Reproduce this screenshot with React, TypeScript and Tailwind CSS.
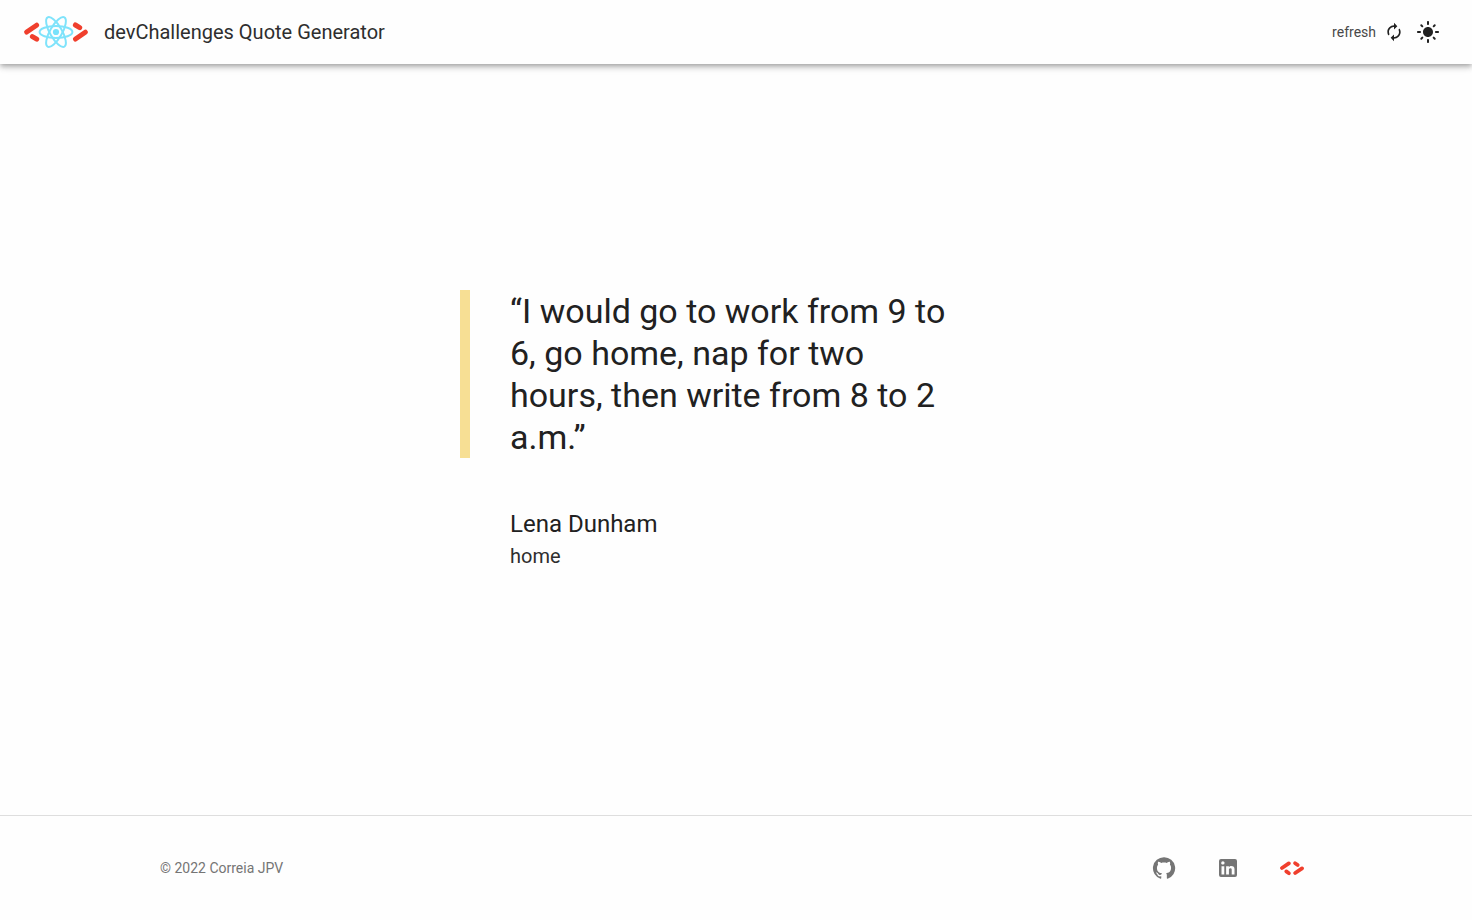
import { MdAutorenew, MdLightMode } from "react-icons/md";

function ReactLogo() {
  return (
    <svg viewBox="0 0 64 48" className="h-12 w-16" aria-hidden="true">
      <g stroke="#f03f2d" strokeWidth="5" strokeLinecap="round">
        <path d="M2.7 24 L12.6 17.2" />
        <path d="M8.4 28.6 L12.7 31.2" />
        <path d="M51.4 17 L55.7 19.6" />
        <path d="M51.5 31 L61.3 24.2" />
      </g>
      <g fill="none" stroke="#7fe3fb" strokeWidth="2">
        <ellipse cx="32" cy="24" rx="16.4" ry="6" />
        <ellipse cx="32" cy="24" rx="16.8" ry="6" transform="rotate(60 32 24)" />
        <ellipse cx="32" cy="24" rx="16.8" ry="6" transform="rotate(120 32 24)" />
      </g>
      <circle cx="32" cy="24" r="3.1" fill="#78e2fb" />
    </svg>
  );
}

function GitHubIcon() {
  return (
    <svg viewBox="0 0 24 24" className="size-6" fill="currentColor" aria-hidden="true">
      <path d="M12 1.27a11 11 0 00-3.48 21.46c.55.09.73-.28.73-.55v-1.84c-3.03.64-3.67-1.46-3.67-1.46-.55-1.29-1.28-1.65-1.28-1.65-.92-.65.1-.65.1-.65 1.1 0 1.73 1.1 1.73 1.1.92 1.65 2.57 1.2 3.21.92a2 2 0 01.64-1.47c-2.47-.27-5.04-1.19-5.04-5.5 0-1.1.46-2.1 1.2-2.84a3.76 3.76 0 010-2.93s.91-.28 3.11 1.1c1.8-.49 3.7-.49 5.5 0 2.1-1.38 3.02-1.1 3.02-1.1a3.76 3.76 0 01.1 2.93c.83.74 1.2 1.74 1.2 2.94 0 4.21-2.57 5.13-5.04 5.4.45.37.82.92.82 2.02v3.03c0 .27.1.64.73.55A11 11 0 0012 1.27" />
    </svg>
  );
}

function LinkedInIcon() {
  return (
    <svg viewBox="0 0 24 24" className="size-6" fill="currentColor" aria-hidden="true">
      <path d="M19 3a2 2 0 0 1 2 2v14a2 2 0 0 1-2 2H5a2 2 0 0 1-2-2V5a2 2 0 0 1 2-2h14m-.5 15.5v-5.3a3.26 3.26 0 0 0-3.26-3.26c-.85 0-1.84.52-2.32 1.3v-1.11h-2.79v8.37h2.79v-4.93c0-.77.62-1.4 1.39-1.4a1.4 1.4 0 0 1 1.4 1.4v4.93h2.79M6.88 8.56a1.68 1.68 0 0 0 1.68-1.68c0-.93-.75-1.69-1.68-1.69a1.69 1.69 0 0 0-1.69 1.69c0 .93.76 1.68 1.69 1.68m1.39 9.94v-8.37H5.5v8.37h2.77z" />
    </svg>
  );
}

function DevChallengesIcon() {
  return (
    <svg viewBox="0 0 24 24" className="size-6" aria-hidden="true">
      <g stroke="#f03f2d" strokeWidth="3.8" strokeLinecap="round">
        <path d="M2 12 L8.8 7.4" />
        <path d="M6.3 15.4 L8.9 17.2" />
        <path d="M15.1 7.2 L17.7 9" />
        <path d="M15.2 17 L22 12.4" />
      </g>
    </svg>
  );
}

export default function App() {
  return (
    <div className="flex min-h-screen flex-col bg-[#fefefe] font-[Roboto,sans-serif] text-[#212121]">
      <header className="flex h-16 items-center justify-between bg-[#fefefe] px-6 shadow-[0_2px_4px_-1px_rgba(0,0,0,0.2),0_4px_5px_0_rgba(0,0,0,0.14),0_1px_10px_0_rgba(0,0,0,0.12)]">
        <div className="flex items-center gap-4">
          <ReactLogo />
          <h1 className="text-xl leading-8 text-[#2e2e2e]">devChallenges Quote Generator</h1>
        </div>
        <div className="flex items-center gap-3 pr-2">
          <button type="button" className="flex items-center gap-2 text-sm leading-5">
            <span className="text-[#484848]">refresh</span>
            <MdAutorenew className="size-5" />
          </button>
          <button type="button" aria-label="Toggle light mode">
            <MdLightMode className="size-6" />
          </button>
        </div>
      </header>

      <main className="flex flex-1 items-center justify-center px-6 pb-5">
        <figure className="w-full max-w-[552px]">
          <blockquote className="border-l-[10px] border-[#f7df94] pr-12 pl-10 text-[34px] leading-[42px]">
            “I would go to work from 9 to 6, go home, nap for two hours, then write from 8 to 2 a.m.”
          </blockquote>
          <figcaption className="mt-12 pl-[50px]">
            <p className="text-2xl leading-9">Lena Dunham</p>
            <p className="text-xl leading-7 text-[#2e2e2e]">home</p>
          </figcaption>
        </figure>
      </main>

      <footer className="border-t border-[#dedede] text-[#757575]">
        <div className="mx-auto flex h-[104px] max-w-[1200px] items-center justify-between px-6">
          <p className="text-sm leading-5">© 2022 Correia JPV</p>
          <nav className="flex items-center gap-10 pr-2" aria-label="Links">
            <a href="#github" aria-label="GitHub"><GitHubIcon /></a>
            <a href="#linkedin" aria-label="LinkedIn"><LinkedInIcon /></a>
            <a href="#devchallenges" aria-label="devChallenges"><DevChallengesIcon /></a>
          </nav>
        </div>
      </footer>
    </div>
  );
}
